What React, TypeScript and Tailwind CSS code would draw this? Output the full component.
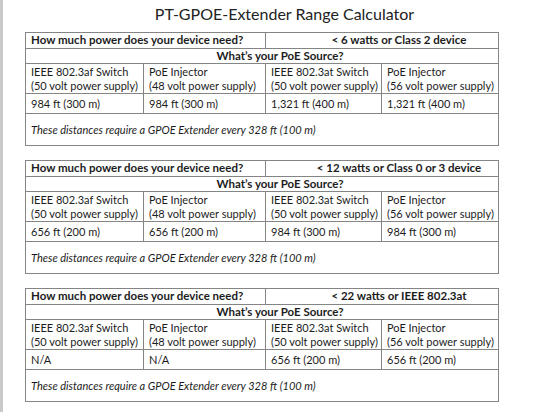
import React from 'react'

type Block = {
  need: string
  results: string[]
}

const blocks: Block[] = [
  { need: '< 6 watts or Class 2 device', results: ['984 ft (300 m)', '984 ft (300 m)', '1,321 ft (400 m)', '1,321 ft (400 m)'] },
  { need: '< 12 watts or Class 0 or 3 device', results: ['656 ft (200 m)', '656 ft (200 m)', '984 ft (300 m)', '984 ft (300 m)'] },
  { need: '< 22 watts or IEEE 802.3at', results: ['N/A', 'N/A', '656 ft (200 m)', '656 ft (200 m)'] },
]

const sources = [
  ['IEEE 802.3af Switch', '(50 volt power supply)'],
  ['PoE Injector', '(48 volt power supply)'],
  ['IEEE 802.3at Switch', '(50 volt power supply)'],
  ['PoE Injector', '(56 volt power supply)'],
]

const cell = 'border-r border-b border-[#858585]'

function RangeTable({ block }: { block: Block }) {
  return (
    <div className="ml-[22px] w-[474px] border-l border-t border-[#858585] text-[11px] leading-[14px] whitespace-nowrap text-[#1c1c1c]">
      <div className="flex h-[16px] text-[11.5px]">
        <div className={`${cell} w-[240px] pl-[5px] font-bold`}>How much power does your device need?</div>
        <div className={`${cell} flex-1 pl-[34px] text-center font-bold`}>{block.need}</div>
      </div>
      <div className={`${cell} h-[15px] pl-[36px] text-center text-[11.5px] font-bold`}>What’s your PoE Source?</div>
      <div className="grid h-[30px] grid-cols-[118px_122px_116px_1fr]">
        {sources.map((s, i) => (
          <div key={i} className={`${cell} overflow-hidden pl-[5px] pt-[1px] leading-[14px]`}>
            <div>{s[0]}</div>
            <div>{s[1]}</div>
          </div>
        ))}
      </div>
      <div className="grid h-[20px] grid-cols-[118px_122px_116px_1fr]">
        {block.results.map((r, i) => (
          <div key={i} className={`${cell} flex items-center pl-[5px]`}>{r}</div>
        ))}
      </div>
      <div className={`${cell} flex h-[32px] items-center pl-[5px] italic`}>
        These distances require a GPOE Extender every 328 ft (100 m)
      </div>
    </div>
  )
}

export default function App() {
  return (
    <div
      className="flex h-[412px] w-[538px] flex-col overflow-hidden border-l-[3px] border-[#c9c9c9] bg-white"
      style={{ fontFamily: 'Lato, "Open Sans", sans-serif' }}
    >
      <h1 className="pt-[1px] pl-[28px] text-center text-[16px] leading-[26px] text-[#222]">PT-GPOE-Extender Range Calculator</h1>
      <div className="mt-[5px] flex flex-col gap-[14px]">
        {blocks.map((b, i) => (
          <RangeTable key={i} block={b} />
        ))}
      </div>
    </div>
  )
}
